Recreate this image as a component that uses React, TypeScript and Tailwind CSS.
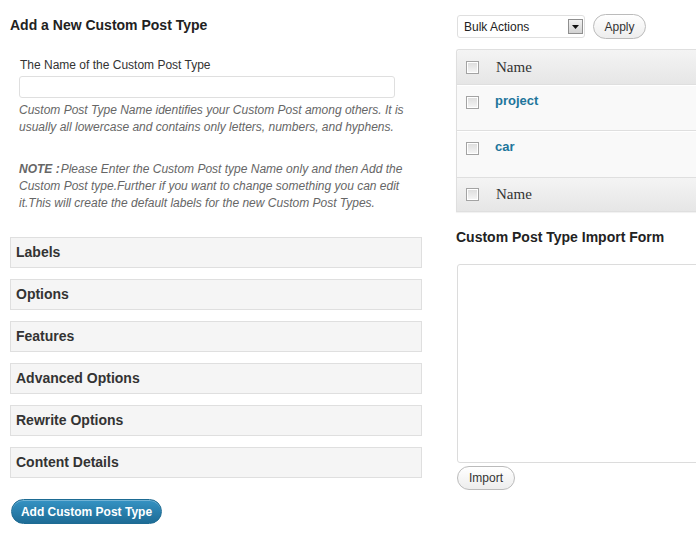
import React from 'react';

const panels = ['Labels', 'Options', 'Features', 'Advanced Options', 'Rewrite Options', 'Content Details'];

const CheckBox: React.FC = () => (
  <span className="block w-[13px] h-[13px] border border-[#a3a3a3] bg-gradient-to-b from-[#dcdcdc] to-[#f6f6f6] shadow-[inset_0_0_0_1px_#fff]" />
);

const PostRow: React.FC<{ name: string; h: string }> = ({ name, h }) => (
  <div className={`flex items-start gap-[16px] pl-[9px] pt-[8px] bg-[#f9f9f9] border-b border-[#dfdfdf] shadow-[inset_0_1px_0_#fff] ${h}`}>
    <div className="pt-[3px]">
      <CheckBox />
    </div>
    <a className="text-[13px] leading-[16px] font-bold text-[#21759b]">{name}</a>
  </div>
);

const HeaderRow: React.FC<{ h: string; top?: boolean }> = ({ h, top }) => (
  <div
    className={`flex items-center gap-[17px] pl-[9px] bg-gradient-to-b from-[#f4f4f4] to-[#e6e6e6] border-b border-[#dfdfdf] ${
      top ? 'rounded-tl-[3px]' : ''
    } ${h}`}
  >
    <CheckBox />
    <span className="font-['Liberation_Serif',serif] text-[15px] text-[#333]">Name</span>
  </div>
);

const App: React.FC = () => {
  return (
    <div className="w-[696px] h-[548px] overflow-hidden bg-white flex font-['Liberation_Sans',Arial,sans-serif] text-[#333]">
      {/* left column */}
      <div className="w-[422px] shrink-0 pl-[10px] pt-[15px]">
        <h2 className="text-[14px] leading-[20px] font-bold text-[#222]">Add a New Custom Post Type</h2>

        <label className="block mt-[22px] pl-[10px] text-[12px] leading-[16px] text-[#333]">
          The Name of the Custom Post Type
        </label>
        <input
          type="text"
          className="block mt-[3px] ml-[9px] w-[376px] h-[22px] border border-[#dfdfdf] rounded-[3px] bg-white"
        />
        <p className="mt-[4px] ml-[9px] w-[402px] text-[12px] leading-[17px] italic text-[#666]">
          Custom Post Type Name identifies your Custom Post among others. It is usually all lowercase and contains
          only letters, numbers, and hyphens.
        </p>
        <p className="mt-[25px] ml-[9px] w-[402px] text-[12px] leading-[17px] italic text-[#666]">
          <b className="mr-[1px]">NOTE :</b>Please Enter the Custom Post type Name only and then Add the Custom Post
          type.Further if you want to change something you can edit it.This will create the default labels for the
          new Custom Post Types.
        </p>

        <div className="mt-[25px] flex flex-col gap-[11px]">
          {panels.map((p) => (
            <div
              key={p}
              className="h-[31px] w-[412px] flex items-center pl-[5px] bg-[#f5f5f5] border border-[#dfdfdf] text-[14px] font-bold text-[#333]"
            >
              {p}
            </div>
          ))}
        </div>

        <button className="mt-[21px] ml-[1px] h-[25px] w-[151px] rounded-full border border-[#1d6b93] bg-gradient-to-b from-[#3593c4] to-[#1e6c96] text-white text-[12px] font-bold shadow-[inset_0_1px_0_rgba(255,255,255,0.3)]">
          Add Custom Post Type
        </button>
      </div>

      {/* right column */}
      <div className="w-[300px] shrink-0 ml-[34px] pt-[14px]">
        <div className="flex items-center gap-[8px] pl-[1px]">
          <div className="relative w-[128px] h-[23px] border border-[#dfdfdf] rounded-[3px] bg-white flex items-center pl-[6px] text-[12px] text-[#222]">
            Bulk Actions
            <span className="absolute right-[1px] top-[3px] w-[15px] h-[15px] border border-[#8f8f8f] bg-gradient-to-b from-[#f2f2f2] to-[#d2d2d2] flex items-center justify-center">
              <svg width="7" height="4" viewBox="0 0 7 4">
                <path d="M0 0h7L3.5 4z" fill="#111" />
              </svg>
            </span>
          </div>
          <button className="h-[25px] w-[53px] rounded-full border border-[#bbb] bg-gradient-to-b from-white to-[#ededed] text-[12px] text-[#333]">
            Apply
          </button>
        </div>

        <div className="mt-[10px] border-l border-t border-[#dfdfdf] rounded-tl-[3px] shadow-[0_1px_1px_rgba(0,0,0,0.06)]">
          <HeaderRow h="h-[35px]" top />
          <PostRow name="project" h="h-[46px]" />
          <PostRow name="car" h="h-[47px]" />
          <HeaderRow h="h-[34px]" />
        </div>

        <h3 className="mt-[15px] text-[14px] leading-[20px] font-bold text-[#222]">Custom Post Type Import Form</h3>
        <textarea className="block mt-[17px] ml-[1px] w-[299px] h-[199px] border border-[#dcdcdc] rounded-[3px] bg-white resize-none" />
        <button className="mt-[3px] ml-[1px] h-[24px] w-[58px] rounded-full border border-[#bbb] bg-gradient-to-b from-white to-[#ededed] text-[12px] text-[#333]">
          Import
        </button>
      </div>
    </div>
  );
};

export default App;
